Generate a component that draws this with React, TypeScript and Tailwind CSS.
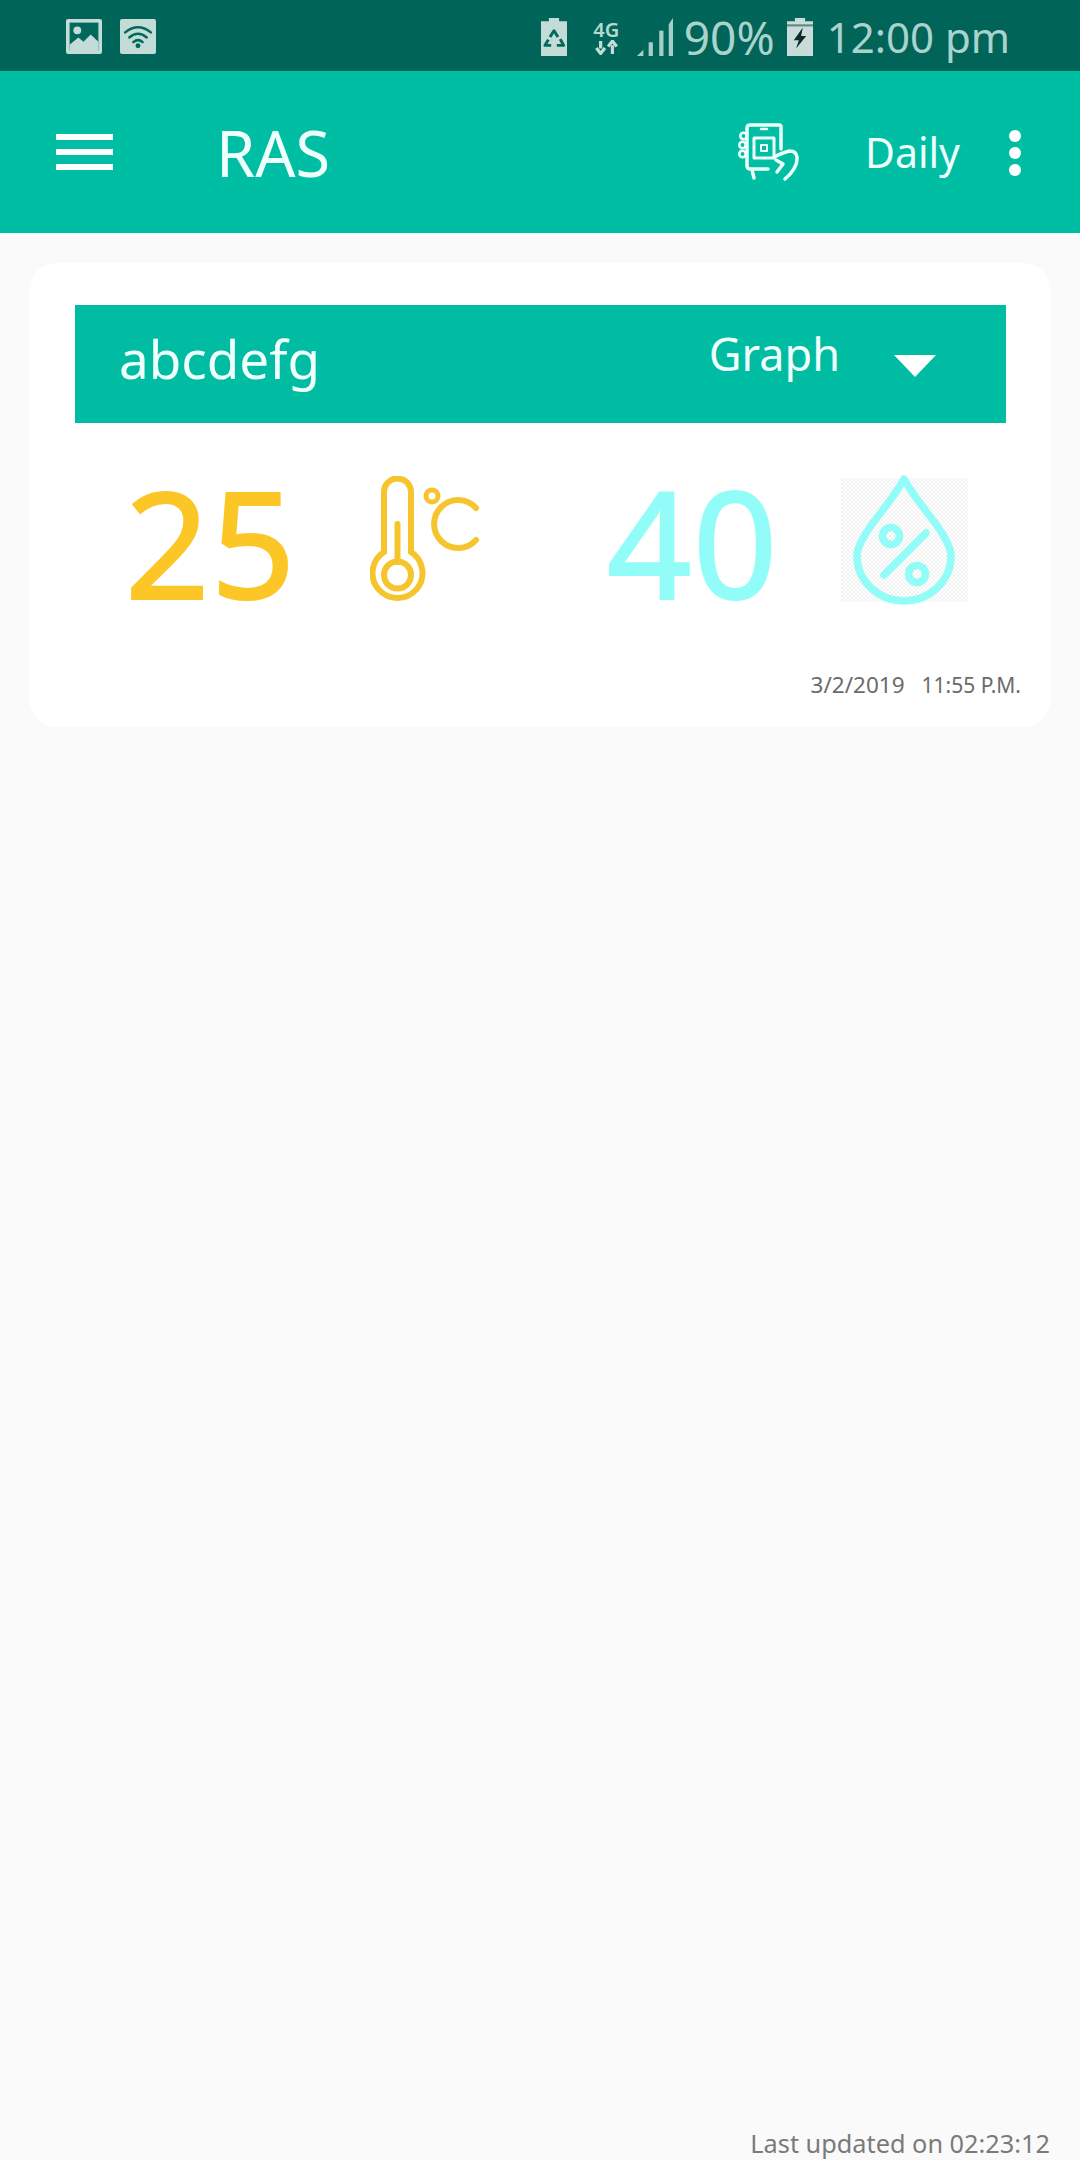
import React from "react";

const font = { fontFamily: '"Noto Sans", "Open Sans", sans-serif' };

function ImageIcon() {
  return (
    <svg width="36" height="35" viewBox="0 0 35 34" className="shrink-0">
      <rect x="0" y="0" width="35" height="34" rx="2" fill="#c4dcd7" />
      <rect x="3.5" y="3.5" width="28" height="27" fill="#00695c" />
      <circle cx="11" cy="11" r="3.8" fill="#c4dcd7" />
      <path d="M3.5 25 L12 18 L17 22 L24 15 L31.5 22 V31 H3.5 Z" fill="#c4dcd7" />
    </svg>
  );
}

function WifiIcon() {
  return (
    <svg width="36" height="35" viewBox="0 0 35 34" className="shrink-0">
      <rect width="35" height="34" rx="2" fill="#c4dcd7" />
      <g fill="none" stroke="#00695c" strokeWidth="2.4" strokeLinecap="round">
        <path d="M5 13 Q17.5 3 30 13" />
        <path d="M9 18 Q17.5 10.5 26 18" />
        <path d="M13 22.5 Q17.5 18.5 22 22.5" />
      </g>
      <circle cx="17.5" cy="26" r="2.4" fill="#00695c" />
    </svg>
  );
}

function RecycleBattery() {
  return (
    <svg width="26" height="38" viewBox="0 0 23 36" preserveAspectRatio="none" className="shrink-0">
      <path d="M7 0 H16 V3 H23 V36 H0 V3 H7 Z" fill="#c4dcd7" />
      <g fill="none" stroke="#00695c" strokeWidth="2.6" strokeLinejoin="round">
        <path d="M8 18 L11.5 12 L15 18" />
        <path d="M17 20 L20 26 H14" />
        <path d="M9 26 H3.5 L6.5 20.5" />
      </g>
    </svg>
  );
}

function NetworkIcon() {
  return (
    <div className="flex flex-col items-center w-[27px] shrink-0">
      <span className="text-[20px] leading-[21px] font-semibold text-[#b5d8d1]">4G</span>
      <svg width="24" height="15" viewBox="0 0 22 14">
        <path d="M6 1 V8 M2 7.5 L6 12.5 L10 7.5" stroke="#c4dcd7" strokeWidth="3" fill="none" />
        <path d="M17 13 V5 M13 6 L17 1 L21 6" stroke="#c4dcd7" strokeWidth="3" fill="none" />
      </svg>
    </div>
  );
}

function SignalIcon() {
  return (
    <svg width="36" height="38" viewBox="0 0 34 36" preserveAspectRatio="none" className="shrink-0">
      <path d="M0 36 L6 30 V36 Z" fill="#a5cfc8" />
      <rect x="11" y="23" width="4" height="13" fill="#a5cfc8" />
      <rect x="21" y="12" width="4" height="24" fill="#a5cfc8" />
      <path d="M30 6 L34 0 V36 H30 Z" fill="#a5cfc8" />
    </svg>
  );
}

function BoltBattery() {
  return (
    <svg width="26" height="38" viewBox="0 0 23 36" preserveAspectRatio="none" className="shrink-0">
      <path d="M7 0 H16 V3 H23 V36 H0 V3 H7 Z" fill="#c9dcd9" />
      <rect x="0" y="6" width="23" height="2" fill="#5b8a82" />
      <path d="M14 9 L6 21 H10.5 L8 29 L17 17 H12.5 Z" fill="#0d2b27" />
    </svg>
  );
}

function PhoneHandIcon() {
  return (
    <svg width="62" height="58" viewBox="0 0 62 58" className="shrink-0" fill="none" stroke="#ecfffb" strokeWidth="3.5" strokeLinecap="round" strokeLinejoin="round">
      <path d="M43 26 V4 Q43 2 41 2 H12 Q9 2 9 5 V43 Q9 46 13 46 H30" />
      <path d="M23 6 H29" strokeWidth="2.5" />
      <rect x="16" y="15" width="20" height="20" strokeWidth="3" />
      <rect x="23" y="22" width="6" height="6" strokeWidth="2" />
      <circle cx="5.5" cy="13" r="3.2" strokeWidth="2.6" />
      <circle cx="4.5" cy="22" r="3.2" strokeWidth="2.6" />
      <circle cx="4.5" cy="31" r="3.2" strokeWidth="2.6" />
      <path d="M14 47 L16 55" />
      <path d="M36 34 Q46 29 52 28 Q58 28 59 34 Q60 45 47 56" />
      <path d="M38 37 L45 41 L39 49" />
    </svg>
  );
}

function MenuIcon() {
  return (
    <div className="flex flex-col gap-[9px] w-[57px] shrink-0">
      <div className="h-[6px] bg-white" />
      <div className="h-[6px] bg-white" />
      <div className="h-[6px] bg-white" />
    </div>
  );
}

function Thermometer() {
  return (
    <svg width="110" height="128" viewBox="0 0 110 128" fill="none" stroke="#f6c52d" strokeWidth="6" strokeLinecap="round" className="shrink-0">
      <path d="M14 76 V16 A13.5 13.5 0 0 1 41 16 V76 A25 25 0 1 1 14 76 Z" />
      <circle cx="27.5" cy="99" r="13.5" />
      <path d="M27.5 48 V86" />
      <circle cx="62" cy="20" r="6" strokeWidth="5" />
      <path d="M106 32 A24 24 0 1 0 106 64" />
    </svg>
  );
}

function Drop() {
  return (
    <svg width="127" height="130" viewBox="0 0 127 130" className="shrink-0">
      <defs>
        <pattern id="chk" width="4" height="4" patternUnits="userSpaceOnUse">
          <rect width="4" height="4" fill="#ffffff" />
          <rect width="2" height="2" fill="#f1f1f1" />
          <rect x="2" y="2" width="2" height="2" fill="#f1f1f1" />
        </pattern>
      </defs>
      <rect x="0" y="3" width="127" height="124" fill="url(#chk)" />
      <g fill="none" stroke="#92fdf8" strokeWidth="7.5" strokeLinecap="round" strokeLinejoin="round">
        <path d="M63 4 Q68 14 88 40 Q110 68 110 81 A47 45 0 0 1 16 81 Q16 68 38 40 Q58 14 63 4 Z" />
        <path d="M85 58 L43 100" />
        <circle cx="50" cy="61" r="8.5" />
        <circle cx="76" cy="99" r="8.5" />
      </g>
    </svg>
  );
}

export default function App() {
  return (
    <div className="min-h-[2160px] h-[2160px] w-[1080px] flex flex-col bg-[#fafafa] overflow-hidden" style={font}>
      <div className="h-[71px] bg-[#006458] flex items-center pl-[66px] pr-[70px] pt-[2px]">
        <ImageIcon />
        <div className="ml-[18px]"><WifiIcon /></div>
        <div className="ml-auto flex items-center">
          <RecycleBattery />
          <div className="ml-[26px]"><NetworkIcon /></div>
          <div className="ml-[17px]"><SignalIcon /></div>
          <span className="ml-[11px] text-[46px] leading-[50px] text-[#a9d3cc]">90%</span>
          <div className="ml-[12px]"><BoltBattery /></div>
          <span className="ml-[14px] text-[42px] leading-[50px] text-[#a9d3cc] whitespace-nowrap">12:00 pm</span>
        </div>
      </div>

      <div className="h-[162px] bg-[#00bea4] flex items-center pl-[56px] pr-[59px] text-[#effffc]">
        <MenuIcon />
        <span className="ml-[103px] text-[63px] leading-none">RAS</span>
        <div className="ml-auto"><PhoneHandIcon /></div>
        <span className="ml-[65px] text-[41px] leading-none">Daily</span>
        <div className="ml-[49px] flex flex-col gap-[5px] pt-[2px]">
          <div className="w-[12px] h-[12px] rounded-full bg-white" />
          <div className="w-[12px] h-[12px] rounded-full bg-white" />
          <div className="w-[12px] h-[12px] rounded-full bg-white" />
        </div>
      </div>

      <div className="mt-[30px] mx-[30px] h-[464px] rounded-[26px] bg-white flex flex-col pt-[42px] pl-[45px] pr-[44px]">
        <div className="h-[118px] bg-[#00bca2] flex items-center pl-[44px] pr-[70px] text-[#effffc]">
          <span className="text-[53px] leading-none -mt-[12px]">abcdefg</span>
          <span className="ml-auto text-[45px] leading-none -mt-[22px]">Graph</span>
          <div className="ml-[54px] mt-[4px] w-0 h-0 border-l-[21px] border-r-[21px] border-t-[22px] border-l-transparent border-r-transparent border-t-white" />
        </div>

        <div className="flex items-center mt-[52px] h-[130px]">
          <span className="ml-[50px] w-[245px] shrink-0 text-[148px] leading-none text-[#fcc726] [-webkit-text-stroke:2px_#fcc726] tracking-[1px] translate-y-[2px]">25</span>
          <div><Thermometer /></div>
          <span className="ml-[127px] w-[234px] shrink-0 text-[148px] leading-none text-[#92fdf8] [-webkit-text-stroke:2px_#92fdf8] tracking-[1px] translate-y-[2px]">40</span>
          <div className="shrink-0"><Drop /></div>
        </div>

        <div className="mt-[69px] -mr-[15px] flex justify-end items-baseline leading-none text-[#6b6b6b] whitespace-pre">
          <span className="text-[22.5px]">3/2/2019</span>
          <span className="ml-[17px] text-[21px]">11:55 P.M.</span>
        </div>
      </div>

      <div className="mt-auto pr-[30px] text-right text-[25.3px] leading-[36px] text-[#7a7a7a] translate-y-[1px]">Last updated on 02:23:12</div>
    </div>
  );
}
